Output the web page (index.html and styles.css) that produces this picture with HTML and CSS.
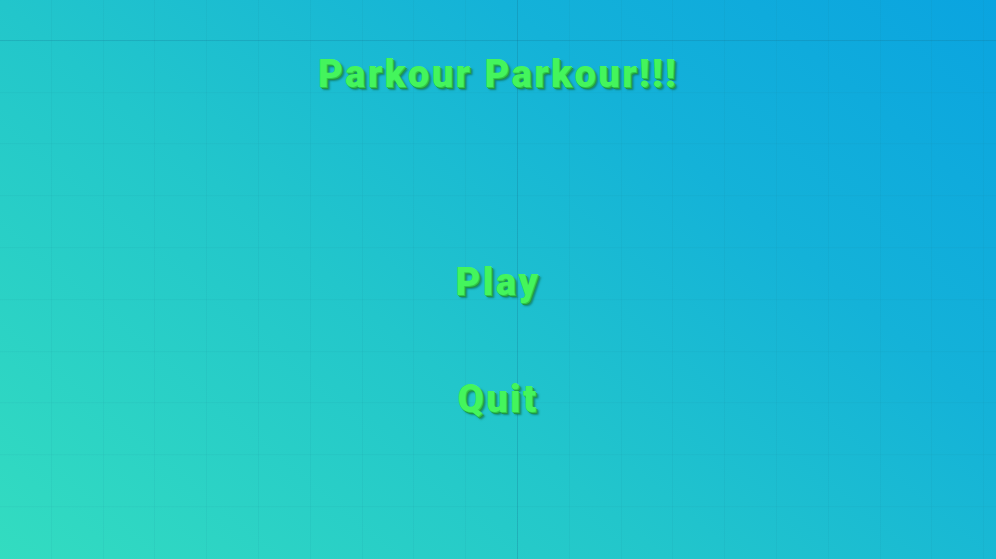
FILE: index.html
```html
<!DOCTYPE html>
<html>
<head>
<meta charset="utf-8">
<link rel="stylesheet" href="styles.css">
</head>
<body>
<div class="screen">
  <h1 class="title">Parkour Parkour!!!</h1>
  <nav class="menu">
    <div class="item play">Play</div>
    <div class="item quit">Quit</div>
  </nav>
</div>
</body>
</html>
```
FILE: styles.css
```css
html, body {
  margin: 0;
  padding: 0;
  width: 996px;
  height: 559px;
  overflow: hidden;
}
.screen {
  width: 996px;
  height: 559px;
  box-sizing: border-box;
  display: flex;
  flex-direction: column;
  align-items: center;
  font-family: Roboto, "Liberation Sans", sans-serif;
  background:
    linear-gradient(90deg, transparent 517px, rgba(20,110,140,0.22) 517px, rgba(20,110,140,0.22) 518px, transparent 518px),
    linear-gradient(180deg, transparent 40px, rgba(20,110,140,0.2) 40px, rgba(20,110,140,0.2) 41px, transparent 41px),
    repeating-linear-gradient(90deg, transparent 0, transparent 50.8px, rgba(20,120,140,0.08) 50.8px, rgba(20,120,140,0.08) 51.8px),
    repeating-linear-gradient(180deg, transparent 0, transparent 50.8px, rgba(20,120,140,0.08) 50.8px, rgba(20,120,140,0.08) 51.8px) 0 -10.8px,
    linear-gradient(40deg, #33dcc0 0%, #22c6cb 40%, #14b2d8 70%, #0aa4e0 100%);
  padding-top: 50px;
}
.title, .item {
  margin: 0;
  font-weight: 900;
  font-size: 38px;
  letter-spacing: 2.5px;
  color: #44f55c;
  line-height: 48px;
  text-shadow: 1px 1px 0 #30c94c, 2px 2px 0 #1e9a40, 3px 3px 2px rgba(10,90,40,0.55);
}
.menu {
  display: flex;
  flex-direction: column;
  align-items: center;
  gap: 69px;
  margin-top: 160px;
}
```
